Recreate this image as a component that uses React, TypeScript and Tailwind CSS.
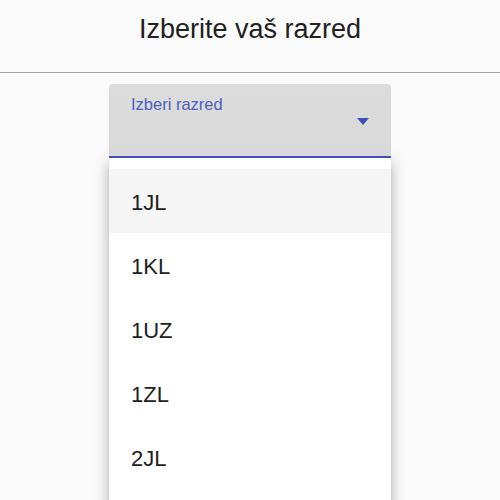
const classes = ["1JL", "1KL", "1UZ", "1ZL", "2JL"];

export default function App() {
  return (
    <div className="h-[500px] w-[500px] overflow-hidden bg-[#fafafa] font-['Liberation_Sans',Arial,sans-serif] text-[#212121]">
      {/* Header */}
      <div className="h-[73px] border-b border-[#9e9e9e] pt-4 text-center">
        <h1 className="text-[27px] leading-none">Izberite vaš razred</h1>
      </div>

      <div className="mx-auto mt-[11px] w-[282px]">
        {/* Select field */}
        <div className="relative h-[74px] rounded-t-[4px] border-b-2 border-[#3f51b5] bg-gradient-to-b from-[#dcdcdc] to-[#d9d9d9] px-[22px] pt-[9px]">
          <span className="text-[16.5px] leading-none text-[#4e5fc0]">Izberi razred</span>
          <svg className="absolute top-[34px] right-[22px] h-[7px] w-3" viewBox="0 0 12 7">
            <path d="M0 0h12L6 7z" fill="#3f51b5" />
          </svg>
        </div>

        {/* Menu */}
        <div className="bg-white pt-[11px] pb-16 shadow-[0_5px_5px_-3px_rgba(0,0,0,0.2),0_8px_10px_1px_rgba(0,0,0,0.14),0_3px_14px_2px_rgba(0,0,0,0.12)]">
          {classes.map((c, i) => (
            <div
              key={c}
              className={`flex h-16 items-center px-[22px] pt-1 text-[22px] leading-none ${i === 0 ? "bg-[#f5f5f5]" : ""}`}
            >
              {c}
            </div>
          ))}
        </div>
      </div>
    </div>
  );
}
